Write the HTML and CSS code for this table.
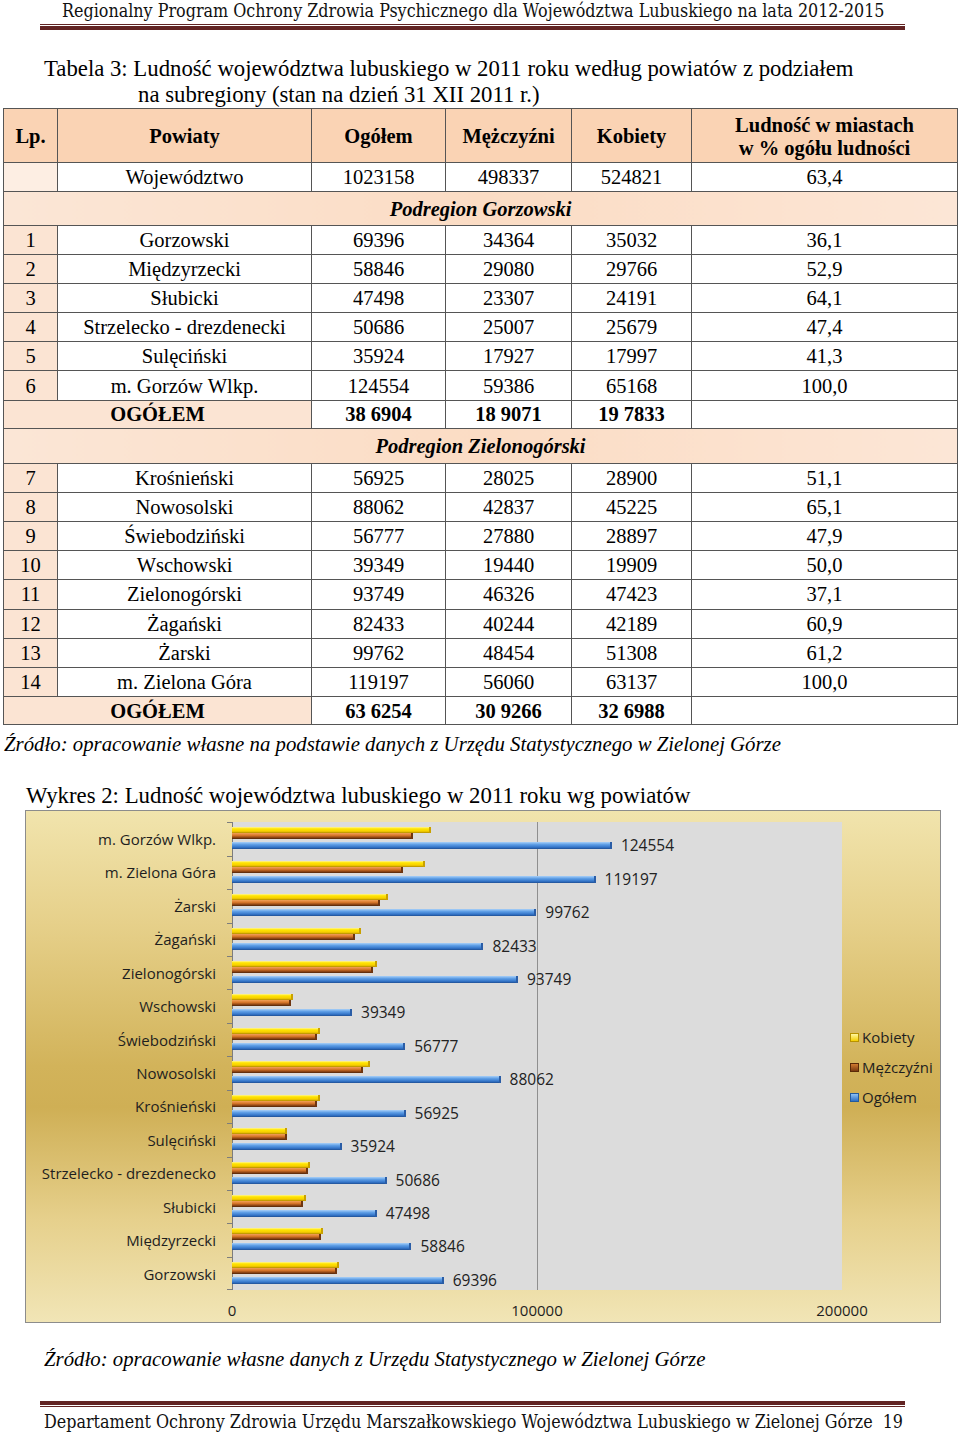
FILE: index.html
```html
<!DOCTYPE html>
<html lang="pl">
<head>
<meta charset="utf-8">
<title>Ludność województwa lubuskiego</title>
<link rel="stylesheet" href="styles.css">
</head>
<body>
<div class="page">
  <header class="runhead">
    <div class="runhead-text">Regionalny Program Ochrony Zdrowia Psychicznego dla Województwa Lubuskiego na lata 2012-2015</div>
    <div class="rule rule-thin"></div>
    <div class="rule rule-thick"></div>
  </header>

  <p class="caption">Tabela 3: Ludność województwa lubuskiego w 2011 roku według powiatów z podziałem<br>na subregiony (stan na dzień 31 XII 2011 r.)</p>

  <table class="data">
    <colgroup>
      <col class="c-lp"><col class="c-pow"><col class="c-og"><col class="c-m"><col class="c-k"><col class="c-l">
    </colgroup>
    <tr class="head">
      <td>Lp.</td><td>Powiaty</td><td>Ogółem</td><td>Mężczyźni</td><td>Kobiety</td><td class="two">Ludność w miastach<br>w % ogółu ludności</td>
    </tr>
    <tr class="row woj"><td class="lp lp-light"></td><td>Województwo</td><td>1023158</td><td>498337</td><td>524821</td><td>63,4</td></tr>
    <tr class="region"><td colspan="6">Podregion Gorzowski</td></tr>
    <tr class="row"><td class="lp">1</td><td>Gorzowski</td><td>69396</td><td>34364</td><td>35032</td><td>36,1</td></tr>
    <tr class="row"><td class="lp">2</td><td>Międzyrzecki</td><td>58846</td><td>29080</td><td>29766</td><td>52,9</td></tr>
    <tr class="row"><td class="lp">3</td><td>Słubicki</td><td>47498</td><td>23307</td><td>24191</td><td>64,1</td></tr>
    <tr class="row"><td class="lp">4</td><td>Strzelecko - drezdenecki</td><td>50686</td><td>25007</td><td>25679</td><td>47,4</td></tr>
    <tr class="row"><td class="lp">5</td><td>Sulęciński</td><td>35924</td><td>17927</td><td>17997</td><td>41,3</td></tr>
    <tr class="row"><td class="lp">6</td><td>m. Gorzów Wlkp.</td><td>124554</td><td>59386</td><td>65168</td><td>100,0</td></tr>
    <tr class="row total"><td colspan="2" class="lp">OGÓŁEM</td><td>38 6904</td><td>18 9071</td><td>19 7833</td><td></td></tr>
    <tr class="region region2"><td colspan="6">Podregion Zielonogórski</td></tr>
    <tr class="row"><td class="lp">7</td><td>Krośnieński</td><td>56925</td><td>28025</td><td>28900</td><td>51,1</td></tr>
    <tr class="row"><td class="lp">8</td><td>Nowosolski</td><td>88062</td><td>42837</td><td>45225</td><td>65,1</td></tr>
    <tr class="row"><td class="lp">9</td><td>Świebodziński</td><td>56777</td><td>27880</td><td>28897</td><td>47,9</td></tr>
    <tr class="row"><td class="lp">10</td><td>Wschowski</td><td>39349</td><td>19440</td><td>19909</td><td>50,0</td></tr>
    <tr class="row"><td class="lp">11</td><td>Zielonogórski</td><td>93749</td><td>46326</td><td>47423</td><td>37,1</td></tr>
    <tr class="row"><td class="lp">12</td><td>Żagański</td><td>82433</td><td>40244</td><td>42189</td><td>60,9</td></tr>
    <tr class="row"><td class="lp">13</td><td>Żarski</td><td>99762</td><td>48454</td><td>51308</td><td>61,2</td></tr>
    <tr class="row"><td class="lp">14</td><td>m. Zielona Góra</td><td>119197</td><td>56060</td><td>63137</td><td>100,0</td></tr>
    <tr class="row total total2"><td colspan="2" class="lp">OGÓŁEM</td><td>63 6254</td><td>30 9266</td><td>32 6988</td><td></td></tr>
  </table>

  <p class="source">Źródło: opracowanie własne na podstawie danych z Urzędu Statystycznego w Zielonej Górze</p>

  <p class="chart-title">Wykres 2: Ludność województwa lubuskiego w 2011 roku wg powiatów</p>

  <div class="chart">
    <div class="chart-main">
      <div class="chart-body">
        <div class="cats">
          <div class="cat">m. Gorzów Wlkp.</div>
          <div class="cat">m. Zielona Góra</div>
          <div class="cat">Żarski</div>
          <div class="cat">Żagański</div>
          <div class="cat">Zielonogórski</div>
          <div class="cat">Wschowski</div>
          <div class="cat">Świebodziński</div>
          <div class="cat">Nowosolski</div>
          <div class="cat">Krośnieński</div>
          <div class="cat">Sulęciński</div>
          <div class="cat">Strzelecko - drezdenecko</div>
          <div class="cat">Słubicki</div>
          <div class="cat">Międzyrzecki</div>
          <div class="cat">Gorzowski</div>
        </div>
        <div class="plot">
          <div class="gridline"></div>
          <div class="band"><div class="bar k" style="width:32.584%"></div><div class="bar m" style="width:29.693%"></div><div class="brow"><div class="bar o" style="width:62.277%"></div><span class="val">124554</span></div></div>
          <div class="band"><div class="bar k" style="width:31.569%"></div><div class="bar m" style="width:28.03%"></div><div class="brow"><div class="bar o" style="width:59.599%"></div><span class="val">119197</span></div></div>
          <div class="band"><div class="bar k" style="width:25.654%"></div><div class="bar m" style="width:24.227%"></div><div class="brow"><div class="bar o" style="width:49.881%"></div><span class="val">99762</span></div></div>
          <div class="band"><div class="bar k" style="width:21.095%"></div><div class="bar m" style="width:20.122%"></div><div class="brow"><div class="bar o" style="width:41.217%"></div><span class="val">82433</span></div></div>
          <div class="band"><div class="bar k" style="width:23.712%"></div><div class="bar m" style="width:23.163%"></div><div class="brow"><div class="bar o" style="width:46.875%"></div><span class="val">93749</span></div></div>
          <div class="band"><div class="bar k" style="width:9.955%"></div><div class="bar m" style="width:9.72%"></div><div class="brow"><div class="bar o" style="width:19.675%"></div><span class="val">39349</span></div></div>
          <div class="band"><div class="bar k" style="width:14.449%"></div><div class="bar m" style="width:13.94%"></div><div class="brow"><div class="bar o" style="width:28.389%"></div><span class="val">56777</span></div></div>
          <div class="band"><div class="bar k" style="width:22.613%"></div><div class="bar m" style="width:21.419%"></div><div class="brow"><div class="bar o" style="width:44.031%"></div><span class="val">88062</span></div></div>
          <div class="band"><div class="bar k" style="width:14.45%"></div><div class="bar m" style="width:14.013%"></div><div class="brow"><div class="bar o" style="width:28.463%"></div><span class="val">56925</span></div></div>
          <div class="band"><div class="bar k" style="width:8.999%"></div><div class="bar m" style="width:8.964%"></div><div class="brow"><div class="bar o" style="width:17.962%"></div><span class="val">35924</span></div></div>
          <div class="band"><div class="bar k" style="width:12.84%"></div><div class="bar m" style="width:12.504%"></div><div class="brow"><div class="bar o" style="width:25.343%"></div><span class="val">50686</span></div></div>
          <div class="band"><div class="bar k" style="width:12.096%"></div><div class="bar m" style="width:11.654%"></div><div class="brow"><div class="bar o" style="width:23.749%"></div><span class="val">47498</span></div></div>
          <div class="band"><div class="bar k" style="width:14.883%"></div><div class="bar m" style="width:14.54%"></div><div class="brow"><div class="bar o" style="width:29.423%"></div><span class="val">58846</span></div></div>
          <div class="band"><div class="bar k" style="width:17.516%"></div><div class="bar m" style="width:17.182%"></div><div class="brow"><div class="bar o" style="width:34.698%"></div><span class="val">69396</span></div></div>
        </div>
      </div>
      <div class="xaxis"><span>0</span><span>100000</span><span>200000</span></div>
    </div>
    <div class="legend">
      <div class="legend-item"><span class="swatch k"></span>Kobiety</div>
      <div class="legend-item"><span class="swatch m"></span>Mężczyźni</div>
      <div class="legend-item"><span class="swatch o"></span>Ogółem</div>
    </div>
  </div>

  <p class="source source2">Źródło: opracowanie własne danych z Urzędu Statystycznego w Zielonej Górze</p>

  <footer class="runfoot">
    <div class="rule rule-thick"></div>
    <div class="rule rule-thin"></div>
    <div class="runfoot-text">Departament Ochrony Zdrowia Urzędu Marszałkowskiego Województwa Lubuskiego w Zielonej Górze<span class="pageno">19</span></div>
  </footer>
</div>
</body>
</html>
```

FILE: styles.css
```css
html, body {
  margin: 0;
  padding: 0;
  background: #fff;
}
body {
  font-family: "Liberation Serif", "Times New Roman", serif;
  color: #000;
}
.page {
  width: 960px;
}

/* running header / footer */
.runhead-text,
.runfoot-text {
  font-family: "DejaVu Serif", serif;
  font-stretch: condensed;
  font-size: 17.75px;
  line-height: 22px;
  color: #111;
  white-space: nowrap;
}
.runhead-text {
  padding-left: 62px;
}
.rule {
  margin-left: 40px;
  margin-right: 55px;
  background: #622423;
}
.rule-thin {
  height: 1px;
}
.rule-thick {
  height: 4px;
}
.runhead .rule-thin {
  margin-top: 2px;
}
.runhead .rule-thick {
  margin-top: 1px;
}

/* caption */
.caption {
  margin: 26px 0 0 0;
  padding-left: 138px;
  text-indent: -94px;
  font-size: 22.75px;
  line-height: 26px;
}

/* table */
.data {
  margin-left: 3px;
  width: 954px;
  table-layout: fixed;
  border-collapse: collapse;
  font-size: 20.5px;
  line-height: 22px;
}
.c-lp { width: 54px; }
.c-pow { width: 254px; }
.c-og { width: 134px; }
.c-m { width: 126px; }
.c-k { width: 120px; }
.c-l { width: 266px; }
.data td {
  border: 1px solid #555;
  padding: 0;
  text-align: center;
  vertical-align: middle;
}
.head td {
  height: 51px;
  font-weight: bold;
  background: #fad3b4;
}
.head td.two {
  line-height: 23px;
  padding-top: 2px;
}
.row td {
  height: 28.1px;
}
.woj td {
  height: 28px;
}
.lp {
  background: #fbe4d3;
}
.lp-light {
  background: #fdeee3;
}
.region td {
  height: 33px;
  font-weight: bold;
  font-style: italic;
  background: linear-gradient(90deg, #fbe6d6, #fbdcc4 50%, #fce6d6);
}
.region2 td {
  height: 34px;
}
.total td {
  font-weight: bold;
  height: 27.5px;
}

/* source lines */
.source {
  margin: 7px 0 0 4px;
  font-style: italic;
  font-size: 20.8px;
  line-height: 24px;
}
.source2 {
  margin: 24px 0 0 44px;
}

/* chart */
.chart-title {
  margin: 27px 0 0 26px;
  font-size: 22.8px;
  line-height: 26px;
}
.chart {
  margin: 1px 0 0 25px;
  width: 916px;
  height: 513px;
  box-sizing: border-box;
  border: 1px solid #8c8c8c;
  display: flex;
  background: linear-gradient(180deg, #f1e4ad 0%, #e6d08a 22%, #d2b35a 50%, #cfaf55 58%, #e6d08c 80%, #f1e5b6 100%);
  font-family: "Open Sans", "DejaVu Sans", sans-serif;
  color: #1e1e1e;
}
.chart-main {
  width: 816px;
  flex-shrink: 0;
  display: flex;
  flex-direction: column;
  padding-top: 11px;
}
.chart-body {
  display: flex;
}
.cats {
  width: 206px;
  display: flex;
  flex-direction: column;
}
.cat {
  position: relative;
  height: 33.43px;
  display: flex;
  align-items: center;
  justify-content: flex-end;
  padding-right: 16px;
  font-size: 15px;
  white-space: nowrap;
}
.cat::before {
  content: "";
  position: absolute;
  right: 0;
  top: 0;
  width: 5px;
  height: 1px;
  background: #7d7d7d;
}
.cat:last-child::after {
  content: "";
  position: absolute;
  right: 0;
  bottom: 0;
  width: 5px;
  height: 1px;
  background: #7d7d7d;
}
.plot {
  position: relative;
  width: 610px;
  height: 468px;
  background: #dcdcdc;
  box-shadow: inset 1px 0 0 #7d7d7d;
}
.gridline {
  position: absolute;
  left: 305px;
  top: 0;
  bottom: 0;
  width: 1px;
  background: #8f8f8f;
}
.band {
  position: relative;
  height: 33.43px;
  padding-top: 5px;
  box-sizing: border-box;
}
.bar {
  height: 6px;
  box-sizing: border-box;
}
.bar.k {
  background: linear-gradient(180deg, #fff59a 0%, #ffe500 30%, #f7cf00 70%, #b08a00 100%);
  border-right: 2px solid #c9a100;
}
.bar.m {
  background: linear-gradient(180deg, #f2a058 0%, #d8772a 40%, #8d4514 75%, #4e2408 100%);
  border-right: 2px solid #6e3510;
}
.brow {
  display: flex;
  align-items: center;
  height: 7px;
  margin-top: 3px;
}
.bar.o {
  height: 7px;
  flex-shrink: 0;
  background: linear-gradient(180deg, #a9d0f8 0%, #5f9fe6 35%, #3374c8 75%, #1f4f93 100%);
  border-right: 2px solid #2a5da6;
}
.val {
  margin-left: 9px;
  font-size: 15.5px;
  line-height: 7px;
  white-space: nowrap;
  color: #222;
}
.xaxis {
  display: flex;
  justify-content: space-between;
  margin-left: 156px;
  width: 710px;
  margin-top: 10px;
  font-size: 15px;
  line-height: 20px;
}
.xaxis span {
  width: 100px;
  text-align: center;
}
.legend {
  flex: 1;
  display: flex;
  flex-direction: column;
  justify-content: center;
  gap: 13px;
  padding-left: 8px;
  padding-top: 2px;
}
.legend-item {
  display: flex;
  align-items: center;
  gap: 3px;
  font-size: 15px;
  line-height: 17px;
  white-space: nowrap;
}
.swatch {
  width: 9px;
  height: 9px;
  box-sizing: border-box;
}
.swatch.k {
  background: linear-gradient(180deg, #fff7a0, #f5cf00);
  border: 1px solid #b89200;
}
.swatch.m {
  background: linear-gradient(180deg, #d07a30, #7a3a10);
  border: 1px solid #5a2a08;
}
.swatch.o {
  background: linear-gradient(180deg, #8cc0f4, #2e6fc4);
  border: 1px solid #245a9c;
}

/* footer */
.runfoot {
  margin-top: 30px;
}
.runfoot .rule-thin {
  margin-top: 1px;
}
.runfoot-text {
  margin-top: 4px;
  padding-left: 44px;
}
.pageno {
  margin-left: 10px;
}
```
